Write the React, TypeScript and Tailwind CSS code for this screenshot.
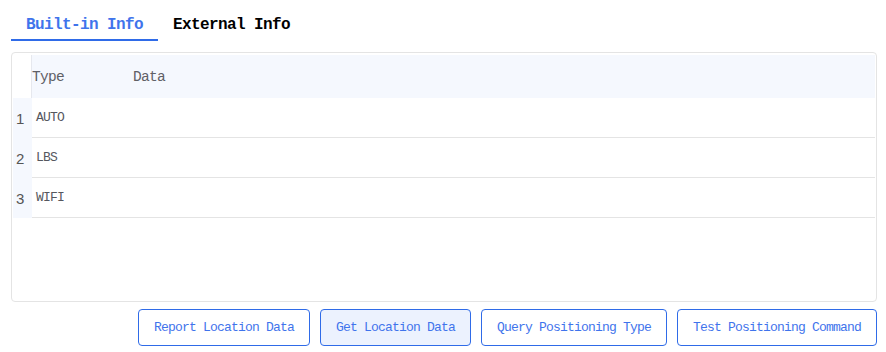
import React, { useState } from 'react';

const rows = ['AUTO', 'LBS', 'WIFI'];

const buttons = [
  { label: 'Report Location Data', active: false },
  { label: 'Get Location Data', active: true },
  { label: 'Query Positioning Type', active: false },
  { label: 'Test Positioning Command', active: false },
];

const mono = "font-['Liberation_Mono','DejaVu_Sans_Mono',monospace]";

const App: React.FC = () => {
  const [tab, setTab] = useState<'builtin' | 'external'>('builtin');

  return (
    <div className="w-[886px] h-[352px] bg-white pl-[11px] pr-[9px] pt-[6px]">
      {/* tabs */}
      <div className="flex">
        {[
          { key: 'builtin', label: 'Built-in Info' },
          { key: 'external', label: 'External Info' },
        ].map((t) => (
          <button
            key={t.key}
            onClick={() => setTab(t.key as any)}
            className={`h-[35px] px-[15px] pt-[4px] flex items-center border-b-2 text-[16px] tracking-[-0.6px] font-bold ${mono} ${
              tab === t.key ? 'border-[#2f6be8] text-[#3f74ec]' : 'border-transparent text-black'
            }`}
          >
            {t.label}
          </button>
        ))}
      </div>

      {/* table card */}
      <div className="mt-[11px] h-[250px] border border-[#e4e4e4] rounded-[4px] pt-[2px] pl-[1px] pr-[1px]">
        <div className="flex h-[43px]">
          <div className="w-[19px] border-r border-[#e6e8ee]" />
          <div className={`flex-1 flex items-center pt-[2px] bg-[#f5f8fe] text-[14.5px] tracking-[-0.7px] text-[#5f6066] ${mono}`}>
            <span className="w-[101px]">Type</span>
            <span>Data</span>
          </div>
        </div>
        {rows.map((r, i) => (
          <div key={r} className="flex h-[40px]">
            <div className="w-[19px] bg-[#f5f8fe] flex items-center pl-[3px] pt-[2px] text-[15px] text-[#555] font-['Liberation_Sans',Arial,sans-serif]">
              {i + 1}
            </div>
            <div className={`flex-1 flex items-center pt-[1px] border-b border-[#e4e4e4] pl-[4px] text-[13px] tracking-[-0.8px] text-[#55575e] ${mono}`}>
              {r}
            </div>
          </div>
        ))}
      </div>

      {/* actions */}
      <div className="flex justify-end gap-[10px] mt-[7px]">
        {buttons.map((b) => (
          <button
            key={b.label}
            className={`h-[37px] px-[15px] rounded-[4px] border border-[#2f6be8] text-[13px] tracking-[-0.8px] text-[#3f74ec] ${mono} ${
              b.active ? 'bg-[#ecf2fe]' : 'bg-white'
            }`}
          >
            {b.label}
          </button>
        ))}
      </div>
    </div>
  );
};

export default App;
